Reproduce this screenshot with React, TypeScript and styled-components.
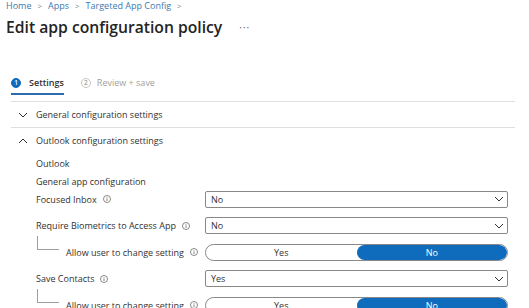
import styled, { createGlobalStyle } from "styled-components";

const GlobalStyle = createGlobalStyle`
  body {
    margin: 0;
    background: #ffffff;
    font-family: "Open Sans", "Noto Sans", sans-serif;
    color: #323130;
  }
`;

const Page = styled.div`
  width: 529px;
  height: 308px;
  overflow: hidden;
`;

const Breadcrumb = styled.div`
  display: flex;
  align-items: center;
  gap: 6px;
  padding-left: 6px;
  height: 12px;
  font-size: 9px;
  line-height: 12px;
  color: #3c79b0;
`;

const Sep = styled.span`
  color: #8a8886;
  font-size: 8px;
`;

const TitleRow = styled.div`
  display: flex;
  align-items: center;
  padding-left: 6px;
  height: 30px;
`;

const Title = styled.h1`
  margin: 0;
  font-size: 15.7px;
  font-weight: 600;
  color: #242424;
`;

const More = styled.span`
  margin-left: 17px;
  font-size: 10px;
  color: #605e5c;
  letter-spacing: 1px;
`;

const Tabs = styled.div`
  display: flex;
  align-items: center;
  gap: 17px;
  margin: 30px 0 0 11px;
  height: 23px;
`;

const Tab = styled.div<{ $active?: boolean }>`
  display: flex;
  align-items: center;
  gap: ${(p) => (p.$active ? "8px" : "6px")};
  height: 100%;
  font-size: 9px;
  font-weight: ${(p) => (p.$active ? 600 : 400)};
  color: ${(p) => (p.$active ? "#323130" : "#a19f9d")};
  border-bottom: 2px solid ${(p) => (p.$active ? "#2b6cb0" : "transparent")};
  box-sizing: border-box;
`;

const StepDot = styled.span<{ $active?: boolean }>`
  width: 10px;
  height: 10px;
  border-radius: 50%;
  box-sizing: border-box;
  display: inline-flex;
  align-items: center;
  justify-content: center;
  font-size: 6.5px;
  font-weight: 600;
  background: ${(p) => (p.$active ? "#0f6cbd" : "transparent")};
  color: ${(p) => (p.$active ? "#ffffff" : "#a19f9d")};
  border: 1px solid ${(p) => (p.$active ? "#0f6cbd" : "#c8c6c4")};
`;

const Sections = styled.div`
  margin: 6px 14px 0 11px;
  border-top: 1px solid #e1dfdd;
`;

const SectionHead = styled.div<{ $divider?: boolean }>`
  display: flex;
  align-items: center;
  gap: 8px;
  height: 25px;
  padding-left: 7px;
  font-size: 9px;
  color: #323130;
  border-bottom: ${(p) => (p.$divider ? "1px solid #e1dfdd" : "none")};
`;

const Chevron = ({ up }: { up?: boolean }) => (
  <svg width="10" height="10" viewBox="0 0 10 10">
    <path
      d={up ? "M1 7 L5 3 L9 7" : "M1 3 L5 7 L9 3"}
      fill="none"
      stroke="#323130"
      strokeWidth="1"
    />
  </svg>
);

const Body = styled.div`
  padding: 2px 0 0 25px;
  font-size: 9px;
`;

const Plain = styled.div`
  height: 17.5px;
  line-height: 17.5px;
`;

const Grid = styled.div`
  display: grid;
  grid-template-columns: 169px 303px;
  grid-auto-rows: 18px;
  row-gap: 8.6px;
  align-items: center;
`;

const Label = styled.div`
  display: flex;
  align-items: center;
  gap: 6px;
  white-space: nowrap;
  line-height: 13px;
`;

const SubLabel = styled(Label)`
  padding-left: 30px;
  position: relative;
  &::before {
    content: "";
    position: absolute;
    left: 1px;
    top: -10px;
    width: 21px;
    height: 13px;
    border-left: 1px solid #a19f9d;
    border-bottom: 1px solid #a19f9d;
  }
`;

const Info = () => (
  <svg width="8" height="8" viewBox="0 0 10 10">
    <circle cx="5" cy="5" r="4.4" fill="none" stroke="#605e5c" strokeWidth="0.9" />
    <line x1="5" y1="4.3" x2="5" y2="7.4" stroke="#605e5c" strokeWidth="1" />
    <circle cx="5" cy="2.9" r="0.6" fill="#605e5c" />
  </svg>
);

const Select = styled.div`
  height: 17px;
  box-sizing: border-box;
  border: 1px solid #8a8886;
  border-radius: 2px;
  display: flex;
  align-items: center;
  justify-content: space-between;
  padding: 0 3px 0 5px;
  font-size: 9px;
  color: #323130;
`;

const Toggle = styled.div`
  height: 17px;
  box-sizing: border-box;
  border: 1px solid #8a8886;
  border-radius: 9px;
  display: grid;
  grid-template-columns: 1fr 1fr;
  overflow: hidden;
  font-size: 9px;
`;

const ToggleOpt = styled.div<{ $on?: boolean }>`
  display: flex;
  align-items: center;
  justify-content: center;
  background: ${(p) => (p.$on ? "#0f6cbd" : "transparent")};
  color: ${(p) => (p.$on ? "#ffffff" : "#323130")};
  border-radius: ${(p) => (p.$on ? "8px" : "0")};
`;

function Dropdown({ value }: { value: string }) {
  return (
    <Select>
      <span>{value}</span>
      <Chevron />
    </Select>
  );
}

function YesNo() {
  return (
    <Toggle>
      <ToggleOpt>Yes</ToggleOpt>
      <ToggleOpt $on>No</ToggleOpt>
    </Toggle>
  );
}

export default function App() {
  return (
    <Page>
      <GlobalStyle />
      <Breadcrumb>
        <span>Home</span>
        <Sep>&gt;</Sep>
        <span>Apps</span>
        <Sep>&gt;</Sep>
        <span>Targeted App Config</span>
        <Sep>&gt;</Sep>
      </Breadcrumb>
      <TitleRow>
        <Title>Edit app configuration policy</Title>
        <More>···</More>
      </TitleRow>
      <Tabs>
        <Tab $active>
          <StepDot $active>1</StepDot>
          Settings
        </Tab>
        <Tab>
          <StepDot>2</StepDot>
          Review + save
        </Tab>
      </Tabs>
      <Sections>
        <SectionHead $divider>
          <Chevron />
          General configuration settings
        </SectionHead>
        <SectionHead>
          <Chevron up />
          Outlook configuration settings
        </SectionHead>
        <Body>
          <Plain>Outlook</Plain>
          <Plain>General app configuration</Plain>
          <Grid>
            <Label>
              Focused Inbox <Info />
            </Label>
            <Dropdown value="No" />
            <Label>
              Require Biometrics to Access App <Info />
            </Label>
            <Dropdown value="No" />
            <SubLabel>
              Allow user to change setting <Info />
            </SubLabel>
            <YesNo />
            <Label>
              Save Contacts <Info />
            </Label>
            <Dropdown value="Yes" />
            <SubLabel>
              Allow user to change setting <Info />
            </SubLabel>
            <YesNo />
          </Grid>
        </Body>
      </Sections>
    </Page>
  );
}
